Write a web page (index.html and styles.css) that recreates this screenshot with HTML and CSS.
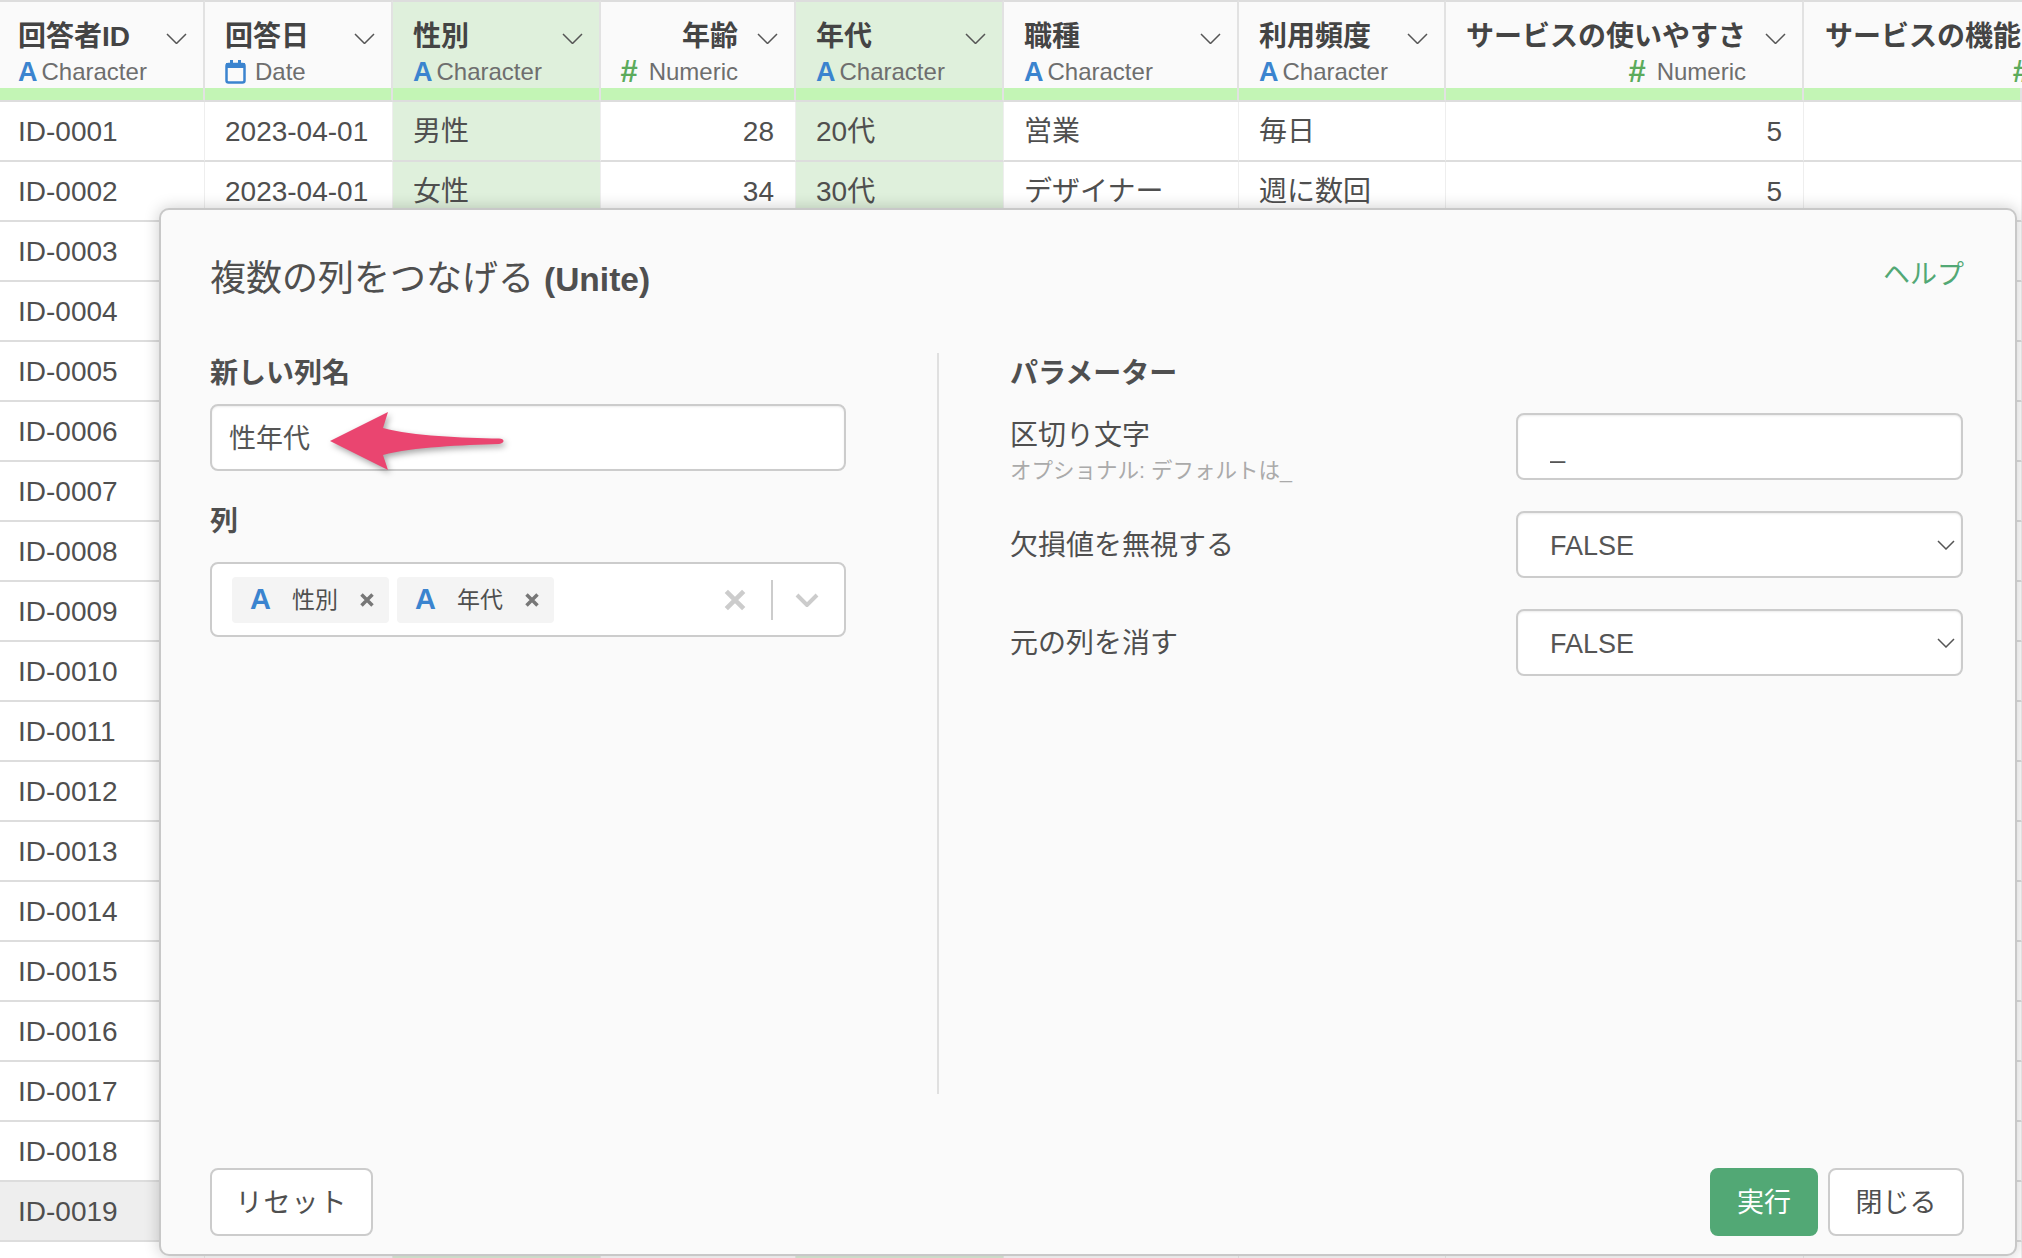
FILE: index.html
```html
<!DOCTYPE html>
<html lang="ja">
<head>
    <meta charset="UTF-8">
    <title>複数の列をつなげる (Unite)</title>
    <link rel="stylesheet" href="styles.css">
</head>
<body>
    <table class="grid">
        <colgroup>
            <col class="w-id"><col class="w-date"><col class="w-sex"><col class="w-age"><col class="w-gen"><col class="w-job"><col class="w-freq"><col class="w-ease"><col class="w-func">
        </colgroup>
        <thead>
            <tr class="head-row">
                <th class="first">
                    <div class="head-name"><span>回答者ID</span><svg class="chev" viewBox="0 0 21 11"><path d="M1 1l9.500 9.500L20 1"/></svg></div>
                    <div class="head-type"><span class="type-a">A</span>Character</div>
                </th>
                <th>
                    <div class="head-name"><span>回答日</span><svg class="chev" viewBox="0 0 21 11"><path d="M1 1l9.500 9.500L20 1"/></svg></div>
                    <div class="head-type date-type">
                        <svg class="cal" viewBox="0 0 21 24"><path d="M5 0h3v4H5zM13 0h3v4h-3z"/><rect x="1.500" y="4" width="18" height="18.500" rx="2"/><path d="M1 3h19v5H1z"/></svg>Date
                    </div>
                </th>
                <th class="picked">
                    <div class="head-name"><span>性別</span><svg class="chev" viewBox="0 0 21 11"><path d="M1 1l9.500 9.500L20 1"/></svg></div>
                    <div class="head-type"><span class="type-a">A</span>Character</div>
                </th>
                <th class="num">
                    <div class="head-name"><span>年齢</span><svg class="chev" viewBox="0 0 21 11"><path d="M1 1l9.500 9.500L20 1"/></svg></div>
                    <div class="head-type"><span class="type-n">#</span>Numeric</div>
                </th>
                <th class="picked">
                    <div class="head-name"><span>年代</span><svg class="chev" viewBox="0 0 21 11"><path d="M1 1l9.500 9.500L20 1"/></svg></div>
                    <div class="head-type"><span class="type-a">A</span>Character</div>
                </th>
                <th>
                    <div class="head-name"><span>職種</span><svg class="chev" viewBox="0 0 21 11"><path d="M1 1l9.500 9.500L20 1"/></svg></div>
                    <div class="head-type"><span class="type-a">A</span>Character</div>
                </th>
                <th>
                    <div class="head-name"><span>利用頻度</span><svg class="chev" viewBox="0 0 21 11"><path d="M1 1l9.500 9.500L20 1"/></svg></div>
                    <div class="head-type"><span class="type-a">A</span>Character</div>
                </th>
                <th class="num">
                    <div class="head-name"><span>サービスの使いやすさ</span><svg class="chev" viewBox="0 0 21 11"><path d="M1 1l9.500 9.500L20 1"/></svg></div>
                    <div class="head-type"><span class="type-n">#</span>Numeric</div>
                </th>
                <th class="num last">
                    <div class="head-name"><span>サービスの機能</span></div>
                    <div class="head-type"><span class="type-n">#</span></div>
                </th>
            </tr>
            <tr class="bar-row">
                <th></th><th></th><th></th><th></th><th></th><th></th><th></th><th></th><th></th>
            </tr>
        </thead>
        <tbody>
            <tr>
                <td class="first">ID-0001</td><td>2023-04-01</td><td class="picked ja">男性</td><td class="num">28</td><td class="picked ja">20代</td><td class="ja">営業</td><td class="ja">毎日</td><td class="num">5</td><td class="num"></td>
            </tr>
            <tr>
                <td class="first">ID-0002</td><td>2023-04-01</td><td class="picked ja">女性</td><td class="num">34</td><td class="picked ja">30代</td><td class="ja">デザイナー</td><td class="ja">週に数回</td><td class="num">5</td><td class="num"></td>
            </tr>
            <tr><td class="first">ID-0003</td><td colspan="8"></td></tr>
            <tr><td class="first">ID-0004</td><td colspan="8"></td></tr>
            <tr><td class="first">ID-0005</td><td colspan="8"></td></tr>
            <tr><td class="first">ID-0006</td><td colspan="8"></td></tr>
            <tr><td class="first">ID-0007</td><td colspan="8"></td></tr>
            <tr><td class="first">ID-0008</td><td colspan="8"></td></tr>
            <tr><td class="first">ID-0009</td><td colspan="8"></td></tr>
            <tr><td class="first">ID-0010</td><td colspan="8"></td></tr>
            <tr><td class="first">ID-0011</td><td colspan="8"></td></tr>
            <tr><td class="first">ID-0012</td><td colspan="8"></td></tr>
            <tr><td class="first">ID-0013</td><td colspan="8"></td></tr>
            <tr><td class="first">ID-0014</td><td colspan="8"></td></tr>
            <tr><td class="first">ID-0015</td><td colspan="8"></td></tr>
            <tr><td class="first">ID-0016</td><td colspan="8"></td></tr>
            <tr><td class="first">ID-0017</td><td colspan="8"></td></tr>
            <tr><td class="first">ID-0018</td><td colspan="8"></td></tr>
            <tr class="hover-row"><td class="first">ID-0019</td><td colspan="8"></td></tr>
            <tr>
                <td class="first"></td><td></td><td class="picked"></td><td></td><td class="picked"></td><td></td><td></td><td></td><td></td>
            </tr>
        </tbody>
    </table>

    <div class="dialog">
        <div class="dialog-head">
            <h1>複数の列をつなげる <b>(Unite)</b></h1>
            <a class="help" href="#">ヘルプ</a>
        </div>

        <div class="dialog-body">
            <div class="left-pane">
                <label class="field-label">新しい列名</label>
                <div class="name-wrap">
                    <input class="text-input name-input" type="text" value="性年代">
                    <svg class="arrow" viewBox="0 0 190 70"><path d="M6 35L64 6l-5 16c30 8 80 10 116 10.500 6 0 6 5 0 5.500-36 1-86 3-116 11l5 15z"/></svg>
                </div>

                <label class="field-label second">列</label>
                <div class="multi">
                    <div class="chip">
                        <span class="chip-a">A</span><span class="chip-text">性別</span>
                        <svg class="chip-x" viewBox="0 0 14 14"><path d="M1.500 1.500l11 11M12.500 1.500l-11 11"/></svg>
                    </div>
                    <div class="chip">
                        <span class="chip-a">A</span><span class="chip-text">年代</span>
                        <svg class="chip-x" viewBox="0 0 14 14"><path d="M1.500 1.500l11 11M12.500 1.500l-11 11"/></svg>
                    </div>
                    <svg class="multi-clear" viewBox="0 0 19 19"><path d="M2 2l15 15M17 2L2 17"/></svg>
                    <span class="multi-sep"></span>
                    <svg class="multi-chev" viewBox="0 0 24 14"><path d="M2 2l10 10L22 2"/></svg>
                </div>
            </div>

            <div class="right-pane">
                <h2>パラメーター</h2>
                <div class="param">
                    <div class="param-text">
                        <div class="param-label">区切り文字</div>
                        <div class="param-sub">オプショナル: デフォルトは_</div>
                    </div>
                    <input class="text-input param-input" type="text" value="_">
                </div>
                <div class="param">
                    <div class="param-label">欠損値を無視する</div>
                    <div class="select-wrap">
                        <select class="text-input param-input"><option>FALSE</option><option>TRUE</option></select>
                        <svg class="select-chev" viewBox="0 0 18 10"><path d="M1 1l8 8 8-8"/></svg>
                    </div>
                </div>
                <div class="param">
                    <div class="param-label">元の列を消す</div>
                    <div class="select-wrap">
                        <select class="text-input param-input"><option>FALSE</option><option>TRUE</option></select>
                        <svg class="select-chev" viewBox="0 0 18 10"><path d="M1 1l8 8 8-8"/></svg>
                    </div>
                </div>
            </div>
        </div>

        <div class="dialog-foot">
            <button class="btn reset" type="button">リセット</button>
            <button class="btn run" type="button">実行</button>
            <button class="btn close" type="button">閉じる</button>
        </div>
    </div>
</body>
</html>
```

FILE: styles.css
```css
html, body {
    height: 100%;
    margin: 0;
    overflow: hidden;
}

body {
    position: relative;
    background: #fff;
    color: #4f4f4f;
    font-family: "Liberation Sans", "Noto Sans CJK JP", sans-serif;
    font-size: 28px;
}

/* data table behind the dialog */
.grid {
    width: 2022px;
    table-layout: fixed;
    border-collapse: separate;
    border-spacing: 0;
}

.w-id { width: 205px; }
.w-date { width: 188px; }
.w-sex { width: 208px; }
.w-age { width: 195px; }
.w-gen { width: 208px; }
.w-job { width: 235px; }
.w-freq { width: 207px; }
.w-ease { width: 358px; }
.w-func { width: 218px; }

.head-row th {
    box-sizing: border-box;
    height: 88px;
    padding: 12px 16px 2px 20px;
    background: #fafafa;
    border-top: 2px solid #ddd;
    border-right: 2px solid #e2e2e2;
    font-weight: normal;
    text-align: left;
    white-space: nowrap;
    overflow: hidden;
}

.head-row th.picked {
    background: #dff0dc;
}

.head-row th.first,
td.first {
    padding-left: 18px;
}

.head-row th.last {
    padding-right: 0;
    padding-left: 21px;
    border-right: 0;
}

.head-name {
    display: flex;
    align-items: center;
    justify-content: space-between;
    height: 40px;
    font-size: 28px;
    font-weight: bold;
    color: #444;
}

.num .head-name span {
    flex: 1;
    margin-right: 19px;
    text-align: right;
}

.last .head-name span {
    margin-right: 0;
    text-align: left;
}

.chev {
    flex: none;
    width: 21px;
    height: 11px;
    margin-top: 8px;
    fill: none;
    stroke: #555;
    stroke-width: 1.500;
}

.head-type {
    display: flex;
    align-items: center;
    height: 28px;
    margin-top: 4px;
    font-size: 24px;
    color: #6e6e6e;
}

.num .head-type {
    justify-content: flex-end;
    padding-right: 40px;
}

.last.num .head-type {
    padding-right: 0;
}

.last .type-n {
    margin-right: -8px;
}

.type-a {
    margin-right: 4px;
    color: #3b84cf;
    font-size: 27px;
    font-weight: bold;
}

.type-n {
    margin-right: 11px;
    color: #5cab5c;
    font-size: 31px;
    font-weight: bold;
}

.cal {
    width: 21px;
    height: 24px;
    margin-right: 9px;
    fill: none;
    stroke: #3b84cf;
    stroke-width: 2.500;
}

.cal path {
    fill: #3b84cf;
    stroke: none;
}

.bar-row th {
    height: 12px;
    padding: 0;
    background: #c3f5b5;
    border-right: 2px solid #e2e2e2;
    border-bottom: 2px solid #ddd;
    box-sizing: content-box;
}

td {
    box-sizing: border-box;
    height: 60px;
    padding: 2px 21px 0 20px;
    background: #fff;
    border-right: 1px solid #eee;
    border-bottom: 2px solid #ddd;
    white-space: nowrap;
}

td.ja {
    padding-top: 0;
    padding-bottom: 5px;
}

td.picked {
    background: #dff0dc;
}

td.num {
    text-align: right;
}

.hover-row td.first {
    background: #eee;
}

/* dialog */
.dialog {
    position: absolute;
    top: 208px;
    left: 159px;
    box-sizing: border-box;
    display: flex;
    flex-direction: column;
    width: 1858px;
    height: 1048px;
    padding: 0 51px 18px 49px;
    background: #fafafa;
    border: 2px solid #c8c8c8;
    border-radius: 10px;
    box-shadow: 0 0 16px rgba(0, 0, 0, 0.2);
}

.dialog-head {
    display: flex;
    justify-content: space-between;
    height: 143px;
}

.dialog-head h1 {
    margin: 45px 0 0;
    font-size: 36px;
    font-weight: normal;
    line-height: 48px;
}

.dialog-head b {
    font-size: 33.500px;
    font-weight: bold;
}

.help {
    margin-top: 45px;
    color: #52a875;
    font-size: 27px;
    line-height: 40px;
    text-decoration: none;
}

.dialog-body {
    display: flex;
    height: 741px;
}

.left-pane {
    box-sizing: border-box;
    width: 727px;
    padding-top: 1px;
}

.field-label {
    display: block;
    font-weight: bold;
    line-height: 40px;
}

.field-label.second {
    margin-top: 31px;
}

.name-wrap {
    position: relative;
    width: 636px;
    margin-top: 10px;
}

.text-input {
    box-sizing: border-box;
    height: 67px;
    background: #fff;
    border: 2px solid #ccc;
    border-radius: 8px;
    box-shadow: inset 0 1px 2px rgba(0, 0, 0, 0.08);
    color: #555;
    font-family: inherit;
    font-size: 27px;
    outline: 0;
}

.name-input {
    display: block;
    width: 100%;
    padding: 0 17px 2px;
}

.arrow {
    position: absolute;
    top: 2px;
    left: 114px;
    width: 190px;
    height: 70px;
    overflow: visible;
    fill: #ea4570;
    filter: drop-shadow(2px 3px 3px rgba(0, 0, 0, 0.35));
}

.multi {
    box-sizing: border-box;
    display: flex;
    align-items: center;
    gap: 8px;
    width: 636px;
    height: 75px;
    margin-top: 20px;
    padding: 0 25px 0 20px;
    background: #fff;
    border: 2px solid #ccc;
    border-radius: 8px;
}

.chip {
    display: flex;
    align-items: center;
    height: 46px;
    padding: 0 15px 0 18px;
    background: #f4f4f4;
    border-radius: 4px;
    font-size: 23px;
}

.chip-a {
    color: #3b84cf;
    font-size: 29px;
    font-weight: bold;
}

.chip-text {
    margin: 0 22px 0 21px;
    padding-bottom: 4px;
}

.chip-x {
    width: 14px;
    height: 14px;
    fill: none;
    stroke: #777;
    stroke-width: 3.500;
}

.multi-clear {
    width: 22px;
    height: 22px;
    margin-left: auto;
    fill: none;
    stroke: #ccc;
    stroke-width: 4;
}

.multi-sep {
    width: 2px;
    height: 40px;
    margin: 0 14px 0 17px;
    background: #ccc;
}

.multi-chev {
    width: 24px;
    height: 14px;
    fill: none;
    stroke: #ccc;
    stroke-width: 4;
}

.right-pane {
    box-sizing: border-box;
    width: 1026px;
    padding-left: 71px;
    border-left: 2px solid #e0e0e0;
}

.right-pane h2 {
    margin: 2px 0 20px;
    font-size: 28px;
    line-height: 38px;
}

.param {
    display: flex;
    align-items: center;
    justify-content: space-between;
    height: 67px;
    margin-bottom: 31px;
}

.param-text {
    margin-top: 6px;
}

.param-label {
    padding-top: 2px;
    font-size: 28px;
    line-height: 40px;
}

.param-sub {
    color: #aaa;
    font-size: 21.500px;
    line-height: 30px;
}

.param-input {
    width: 447px;
    padding: 3px 32px 0;
}

.select-wrap {
    position: relative;
    height: 67px;
}

select.param-input {
    appearance: none;
    -webkit-appearance: none;
}

.select-chev {
    position: absolute;
    top: 29px;
    right: 8px;
    width: 18px;
    height: 10px;
    fill: none;
    stroke: #555;
    stroke-width: 1.500;
}

.dialog-foot {
    display: flex;
    gap: 10px;
    margin-top: auto;
}

.btn {
    box-sizing: border-box;
    height: 68px;
    padding-bottom: 5px;
    background: #fff;
    border: 2px solid #ccc;
    border-radius: 8px;
    color: #4f4f4f;
    font-family: inherit;
    font-size: 27px;
}

.reset {
    width: 163px;
    margin-right: auto;
    letter-spacing: 1px;
}

.run {
    width: 108px;
    background: #52a875;
    border-color: #52a875;
    color: #fff;
}

.close {
    width: 136px;
}
```
